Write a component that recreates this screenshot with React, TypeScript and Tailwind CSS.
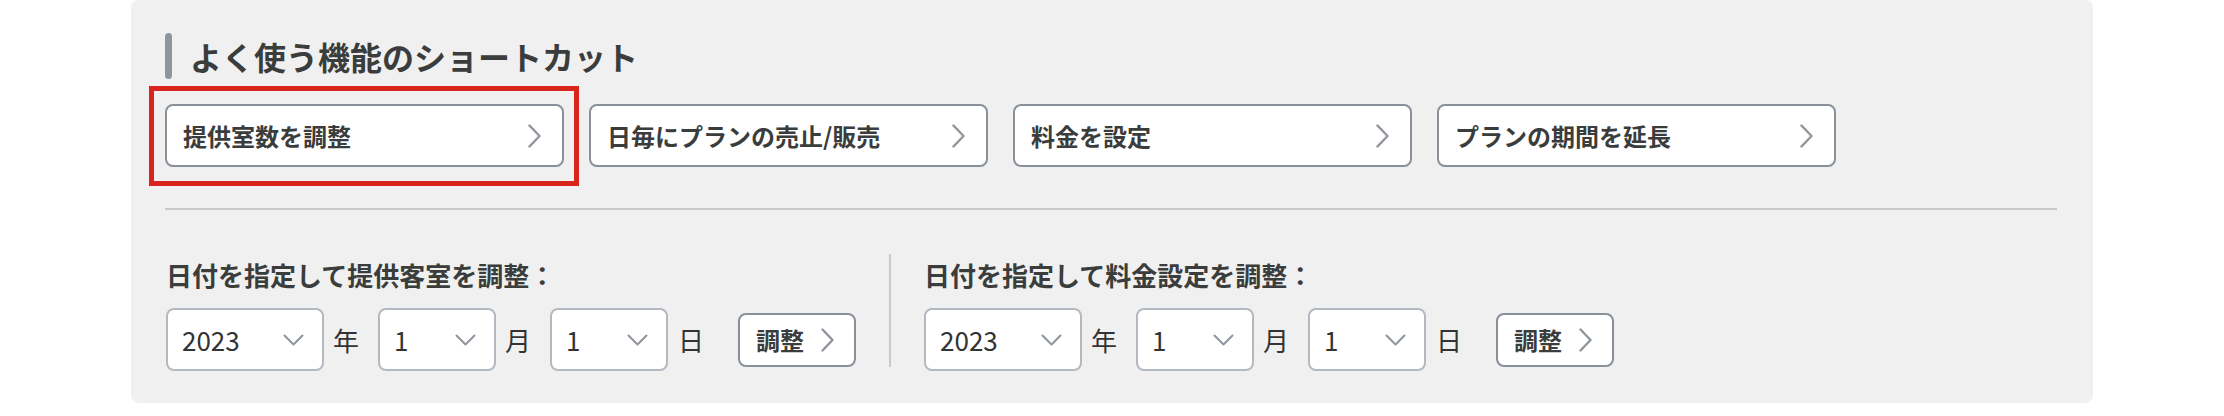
const font = { fontFamily: '"Noto Sans CJK JP", "Noto Sans", sans-serif' };

const shortcuts = ['提供室数を調整', '日毎にプランの売止/販売', '料金を設定', 'プランの期間を延長'];

function ChevronRight({ className = '' }: { className?: string }) {
  return (
    <svg width="13" height="24" viewBox="0 0 13 24" fill="none" className={className}>
      <polyline points="1.5,1.5 11.5,12 1.5,22.5" stroke="#8e959c" strokeWidth="2.4" strokeLinecap="round" strokeLinejoin="round" />
    </svg>
  );
}

function ChevronDown() {
  return (
    <svg width="21" height="12" viewBox="0 0 21 12" fill="none">
      <polyline points="1.5,1.5 10.5,10.5 19.5,1.5" stroke="#8e959c" strokeWidth="2" strokeLinecap="round" strokeLinejoin="round" />
    </svg>
  );
}

function Select({ value, wide }: { value: string; wide?: boolean }) {
  return (
    <div
      className={`flex h-[63px] items-center justify-between rounded-[8px] border-2 border-[#b3b9c0] bg-white pl-[14px] pr-[18px] ${
        wide ? 'w-[158px]' : 'w-[118px]'
      }`}
    >
      <span className="text-[26px] leading-none text-[#333]">{value}</span>
      <ChevronDown />
    </div>
  );
}

function Unit({ label }: { label: string }) {
  return <span className="ml-[9px] mr-[19px] text-[26px] leading-none text-[#333]">{label}</span>;
}

function DateAdjust({ title }: { title: string }) {
  return (
    <div className="flex flex-col">
      <div className="text-[26px] font-bold leading-[42px] text-[#3a3d3b]">{title}</div>
      <div className="mt-[12px] flex items-center">
        <Select value="2023" wide />
        <Unit label="年" />
        <Select value="1" />
        <Unit label="月" />
        <Select value="1" />
        <span className="ml-[10px] text-[26px] leading-none text-[#333]">日</span>
        <button className="ml-[34px] flex h-[54px] w-[118px] items-center justify-between rounded-[8px] border-2 border-[#8a9099] bg-white pl-[16px] pr-[20px]">
          <span className="text-[24px] font-bold leading-none text-[#3a3d3b]">調整</span>
          <ChevronRight />
        </button>
      </div>
    </div>
  );
}

export default function App() {
  return (
    <div className="min-h-screen bg-white" style={font}>
      <div className="mx-auto w-[1962px] rounded-[8px] bg-[#f0f0f0] pb-[32px] pl-[34px] pr-[36px] pt-[33px]">
        {/* Heading */}
        <div className="flex h-[46px] items-center">
          <span className="h-[46px] w-[7px] rounded-full bg-[#8e959c]" />
          <h2 className="ml-[18px] text-[32px] font-bold leading-none text-[#3a3d3b]">よく使う機能のショートカット</h2>
        </div>

        {/* Shortcut buttons */}
        <div className="mt-[25px] flex gap-[25px]">
          {shortcuts.map((label, i) => (
            <div key={label} className="relative">
              {i === 0 && (
                <div className="absolute -bottom-[19px] -left-[16px] -right-[15px] -top-[18px] border-[5px] border-[#d9261c]" />
              )}
              <button className="relative flex h-[63px] w-[399px] items-center justify-between rounded-[8px] border-2 border-[#8a9099] bg-white pl-[16px] pr-[21px]">
                <span className="text-[24px] font-bold leading-none text-[#3a3d3b]">{label}</span>
                <ChevronRight />
              </button>
            </div>
          ))}
        </div>

        <div className="mt-[41px] h-[2px] bg-[#c9c9c9]" />

        {/* Date-specific adjustments */}
        <div className="mt-[44px] flex pl-px">
          <DateAdjust title="日付を指定して提供客室を調整：" />
          <div className="ml-[33px] h-[113px] w-[2px] bg-[#c9c9c9]" />
          <div className="ml-[33px]">
            <DateAdjust title="日付を指定して料金設定を調整：" />
          </div>
        </div>
      </div>
    </div>
  );
}
